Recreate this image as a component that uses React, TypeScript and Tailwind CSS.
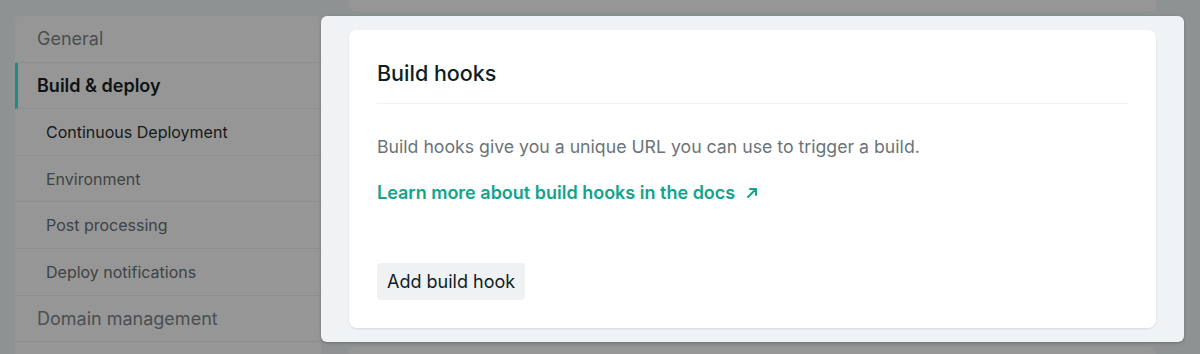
const items = [
  { label: "General", level: 0 },
  { label: "Build & deploy", level: 0, active: true },
  { label: "Continuous Deployment", level: 1, current: true },
  { label: "Environment", level: 1 },
  { label: "Post processing", level: 1 },
  { label: "Deploy notifications", level: 1 },
  { label: "Domain management", level: 0 },
  { label: "", level: 0 },
];

function SideItem({ label, level, active, current }: { label: string; level: number; active?: boolean; current?: boolean }) {
  let cls = "flex items-center h-[46.6px] border-b border-[#8b8e8e] ";
  if (active) cls += "border-l-[3px] border-l-[#1f8d7e] pl-[19px] ";
  else cls += level === 0 ? "pl-[22px] " : "pl-[31px] ";

  let text = "";
  if (level === 0) text = active ? "text-[18px] font-semibold text-[#0d1214]" : "text-[18px] text-[#4a4f51]";
  else text = current ? "text-[16px] text-[#15191b]" : "text-[16px] text-[#3e4345]";

  return (
    <div className={cls}>
      <span className={text}>{label}</span>
    </div>
  );
}

export default function App() {
  return (
    <div className="w-[1200px] h-[354px] overflow-hidden bg-[#8e9292] font-['Inter','Liberation_Sans',sans-serif]">
      <div className="flex pl-[15px] gap-[28px]">
        <div className="w-[306px] mt-[16px] bg-[#969696] rounded-t-[5px] shrink-0">
          {items.map((it, i) => (
            <SideItem key={i} {...it} />
          ))}
        </div>

        <div className="w-[807px] flex flex-col">
          <div className="h-[12px] bg-[#969696] rounded-b-[8px]" />

          <div className="relative z-10 -mx-[28px] mt-[4px] px-[28px] py-[14px] bg-[#f0f3f6] rounded-[6px] shadow-[0_1px_3px_rgba(0,0,0,0.25)]">
            <div className="bg-white rounded-[8px] shadow-[0_1px_2px_rgba(14,30,37,0.12)] px-[28px] pt-[29px] pb-[28px]">
              <h2 className="text-[21.5px] leading-[28px] font-medium text-[#0e1e25] pb-[16px] border-b border-[#eef2f6]">
                Build hooks
              </h2>
              <p className="mt-[31px] text-[17.7px] leading-[24px] text-[#6b7478]">
                Build hooks give you a unique URL you can use to trigger a build.
              </p>
              <div className="mt-[22px]">
                <a className="inline-flex items-center gap-[11px] text-[18px] leading-[24px] font-semibold text-[#11a48b]">
                  Learn more about build hooks in the docs
                  <svg width="12" height="12" viewBox="0 0 12 12" fill="none" stroke="currentColor" strokeWidth="2" strokeLinecap="round" strokeLinejoin="round">
                    <path d="M2 10 L10 2 M4 2 H10 V8" />
                  </svg>
                </a>
              </div>
              <div className="mt-[58px]">
                <button className="h-[37px] px-[10px] rounded-[4px] bg-[#eff1f3] text-[18px] text-[#0e1e25]">
                  Add build hook
                </button>
              </div>
            </div>
          </div>

          <div className="mt-[5px] h-[20px] bg-[#969696] rounded-t-[8px]" />
        </div>
      </div>
    </div>
  );
}
